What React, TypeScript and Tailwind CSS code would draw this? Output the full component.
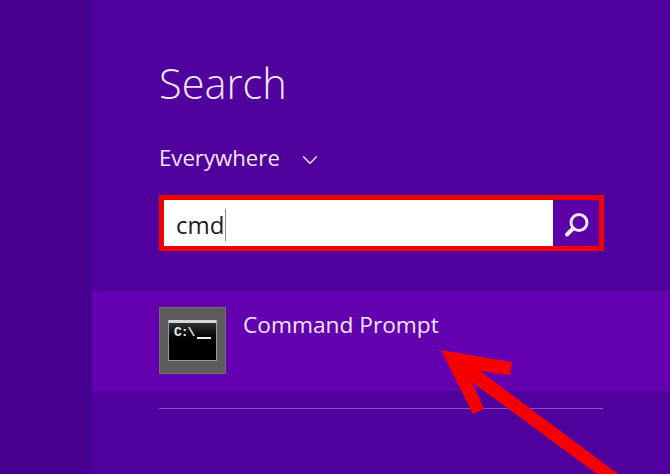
import { ChevronDown } from "lucide-react";

function SearchBox() {
  return (
    <div className="flex h-[56px] w-[445px] border-[5px] border-[#f00000] bg-white">
      <div className="flex flex-1 items-center pl-[12px] pt-[3px] text-[24px] text-[#1c1c1c]">
        cmd
        <span className="ml-[1px] h-[32px] w-px bg-[#8a8a8a]"></span>
      </div>
      <div className="flex w-[46px] items-center justify-center bg-[#5a00a6]">
        <svg width="30" height="30" viewBox="0 0 30 30" fill="none" stroke="#f2e6fa">
          <circle cx="18" cy="14.5" r="8" strokeWidth="3" />
          <path d="M12 20.5 L6 26.5" strokeWidth="4" strokeLinecap="round" />
        </svg>
      </div>
    </div>
  );
}

function CmdIcon() {
  return (
    <div className="flex h-[67px] w-[67px] items-center justify-center border border-[#6e6e6e] bg-[#5c5c5c]">
      <div className="h-[41px] w-[49px] rounded-[1px] border border-[#9a9a9a] border-t-[3px] border-t-[#d8d8d8] bg-gradient-to-b from-[#333333] to-black to-60% pl-[5px] pt-[3px] font-['Liberation_Mono',monospace] text-[13px] font-bold leading-[14px] text-[#eeeeee]">
        <div className="flex items-end gap-[3px]">
          <span className="tracking-[-1px]">C:\</span>
          <span className="mb-[1px] h-[2px] w-[14px] bg-[#eeeeee]"></span>
        </div>
      </div>
    </div>
  );
}

function RedArrow() {
  return (
    <svg className="absolute left-0 top-0" width="670" height="474" viewBox="0 0 670 474">
      <path
        d="M441 350 L512 362 L510 375 L480 371 L618 474 L597 474 L472 382 L484 409 L473 414 Z"
        fill="#f60000"
      />
    </svg>
  );
}

export default function App() {
  return (
    <div className="relative flex h-[474px] w-[670px] overflow-hidden bg-[#50009c] font-['Open_Sans',sans-serif] text-[#f3e6fb]">
      <div className="w-[92px] bg-[#46008f]"></div>
      <div className="flex flex-1 flex-col">
        <div className="pl-[67px]">
          <h1 className="mt-[55px] text-[41.5px] font-light leading-[56px]">Search</h1>
          <div className="mt-[32px] flex items-center gap-[17px] text-[22.2px] leading-[30px]">
            Everywhere
            <ChevronDown size={26} strokeWidth={1.3} className="mt-[3px]" />
          </div>
          <div className="mt-[22px]">
            <SearchBox />
          </div>
        </div>
        <div className="mt-[40px] flex h-[100px] gap-[17px] bg-[#6300b0] pl-[67px] pt-[16px]">
          <CmdIcon />
          <span className="text-[22.7px] leading-[36px]">Command Prompt</span>
        </div>
        <div className="ml-[67px] mt-[17px] h-px w-[444px] bg-[#8a50c4]"></div>
      </div>
      <RedArrow />
    </div>
  );
}
